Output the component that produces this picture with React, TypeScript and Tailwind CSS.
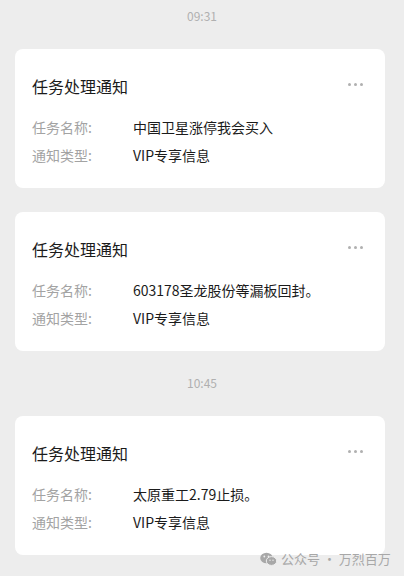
import React from "react";

const font = { fontFamily: '"Noto Sans CJK SC", "Noto Sans", sans-serif' };

function Dots() {
  return (
    <div className="flex items-center gap-[3px] mt-[-4px]">
      <span className="w-[3px] h-[3px] rounded-full bg-[#b0b0b0]" />
      <span className="w-[3px] h-[3px] rounded-full bg-[#b0b0b0]" />
      <span className="w-[3px] h-[3px] rounded-full bg-[#b0b0b0]" />
    </div>
  );
}

function Card({ name }: { name: string }) {
  return (
    <div className="ml-[15px] mr-[19px] bg-white rounded-[8px] pt-[25px] pb-[19px] pl-[17px] pr-[22px]">
      <div className="flex items-center justify-between">
        <div className="text-[16px] leading-[24px] text-[#1b1b1b]">任务处理通知</div>
        <Dots />
      </div>
      <div className="mt-[15px] text-[14px] leading-[28px]">
        <div className="flex">
          <span className="w-[101px] text-[#a3a3a3]">任务名称:</span>
          <span className="text-[#1b1b1b]">{name}</span>
        </div>
        <div className="flex">
          <span className="w-[101px] text-[#a3a3a3]">通知类型:</span>
          <span className="text-[#1b1b1b]">VIP专享信息</span>
        </div>
      </div>
    </div>
  );
}

export default function App() {
  return (
    <div className="relative w-[404px] h-[576px] overflow-hidden bg-[#ededed]" style={font}>
      <div className="pt-[7px] text-center text-[12px] leading-[18px] text-[#b0b0b0]">09:31</div>
      <div className="mt-[24px]">
        <Card name="中国卫星涨停我会买入" />
      </div>
      <div className="mt-[24px]">
        <Card name="603178圣龙股份等漏板回封。" />
      </div>
      <div className="mt-[23px] text-center text-[12px] leading-[18px] text-[#b0b0b0]">10:45</div>
      <div className="mt-[24px]">
        <Card name="太原重工2.79止损。" />
      </div>
      <div className="absolute left-[260px] top-[550px] flex items-center gap-[4px] text-[13px] leading-[18px] text-[#a8a8a8]">
        <svg width="17" height="14" viewBox="0 0 17 14">
          <ellipse cx="6.5" cy="6" rx="6.3" ry="5.3" fill="#a8a8a8" />
          <ellipse cx="11.5" cy="9" rx="5.2" ry="4.4" fill="#a8a8a8" stroke="#ededed" strokeWidth="1" />
          <circle cx="4.3" cy="4.5" r="0.9" fill="#ededed" />
          <circle cx="8.5" cy="4.5" r="0.9" fill="#ededed" />
          <circle cx="10" cy="8.3" r="0.7" fill="#ededed" />
          <circle cx="13" cy="8.3" r="0.7" fill="#ededed" />
        </svg>
        <span>公众号 · 万烈百万</span>
      </div>
    </div>
  );
}
